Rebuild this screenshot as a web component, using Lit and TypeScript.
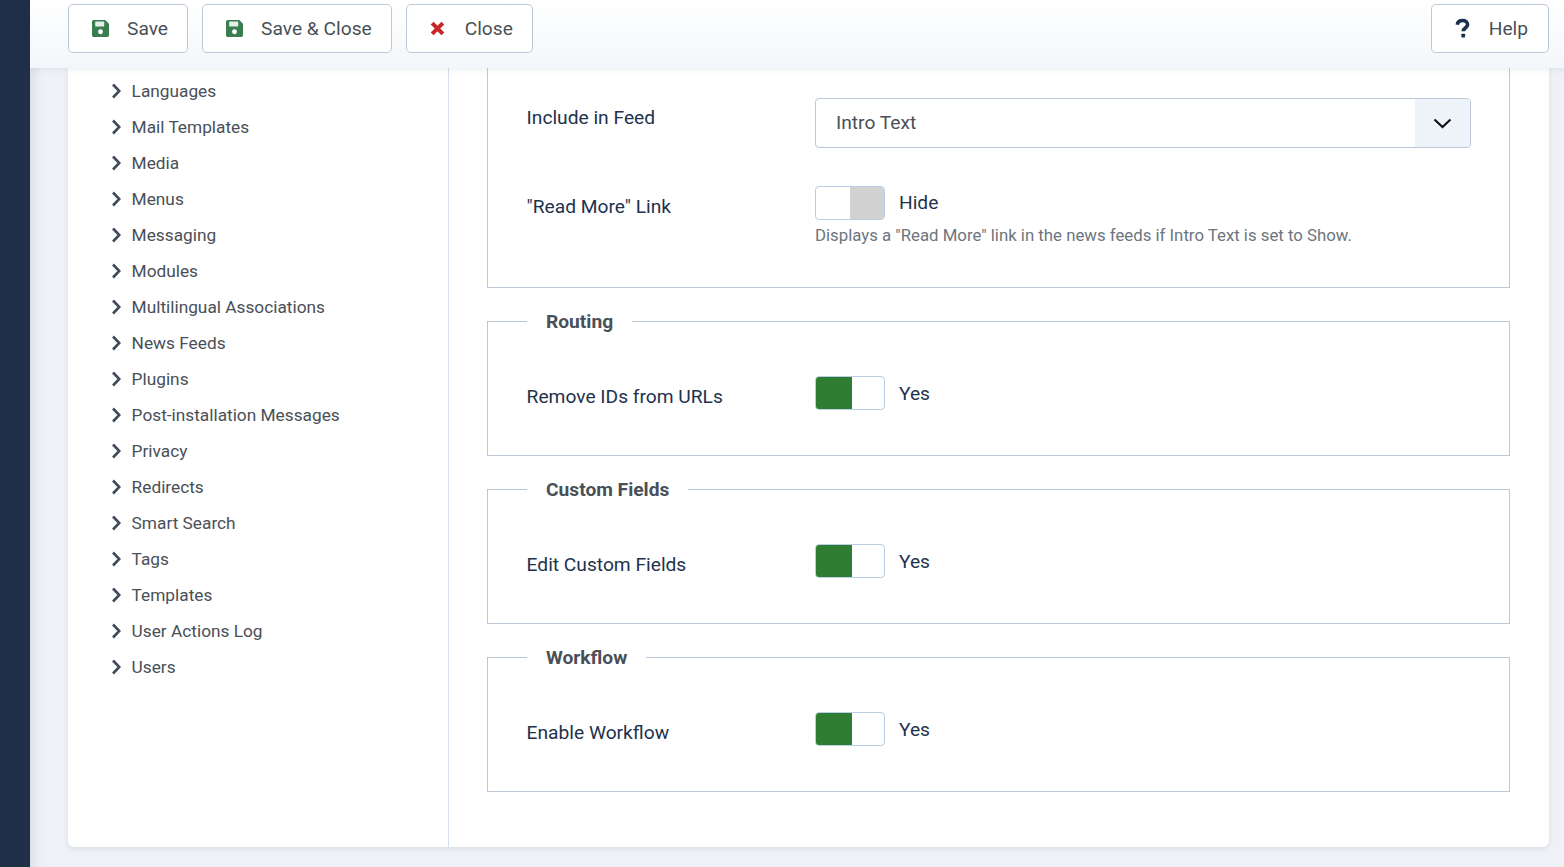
import { LitElement, html, css, svg } from "lit";
import { customElement } from "lit/decorators.js";

const TREE = ["Languages","Mail Templates","Media","Menus","Messaging","Modules","Multilingual Associations","News Feeds","Plugins","Post-installation Messages","Privacy","Redirects","Smart Search","Tags","Templates","User Actions Log","Users"];

const saveIcon = svg`<path fill="#3a7d50" d="M1.700 0H12.500L16 3.500v10.800c0 .9-.8 1.700-1.700 1.700H1.700C.8 16 0 15.200 0 14.300V1.700C0 .8.800 0 1.700 0z"/><rect x="3" y="1.500" width="8.500" height="4.500" fill="#e4efe7" rx=".5"/><circle cx="8" cy="11" r="2.300" fill="#fff"/>`;

@customElement("app-root")
export class AppRoot extends LitElement {
  static styles = css`
    :host { display: flex; height: 867px; overflow: hidden; font-family: Roboto, "Noto Sans", sans-serif; background: #eef2f6; color: #22324d; }
    .rail { width: 30px; flex: none; background: #1f2f48; }
    .main { flex: 1; min-width: 0; display: flex; flex-direction: column; box-shadow: inset 12px 0 12px -10px rgba(28,47,74,.14); }
    .toolbar { height: 68px; flex: none; box-sizing: border-box; display: flex; align-items: flex-start; gap: 14px; padding: 4px 15px 0 38px; position: relative; z-index: 1; background: linear-gradient(#fff, #f3f6fa); box-shadow: 0 1px 6px rgba(28,47,74,.1); }
    .btn { height: 49px; box-sizing: border-box; display: flex; align-items: center; padding: 0 19px 0 19px; background: #fff; border: 1px solid #bcc8da; border-radius: 5px; font-size: 19.200px; color: #495057; }
    .btn.help { padding-right: 20px; }
    .btn svg { display: block; flex: none; }
    .btn .ic { width: 24px; margin-right: 15px; display: flex; justify-content: center; }
    .btn.help .ic { margin-right: 14px; }
    .spacer { flex: 1; }
    .card { width: 1481px; height: 779px; margin-left: 38px; flex: none; box-sizing: border-box; display: flex; background: #fff; border-radius: 0 0 6px 6px; box-shadow: 0 2px 5px rgba(28,47,74,.1); }
    .tree { width: 381px; flex: none; box-sizing: border-box; margin: 0; padding: 5px 0 0 43px; border-right: 1px solid #d5dfed; list-style: none; }
    .tree li { height: 36px; display: flex; align-items: center; font-size: 17.280px; color: #495057; }
    .tree svg { margin-right: 10.600px; flex: none; }
    .content { flex: 1; min-width: 0; padding: 0 39px 0 38px; }
    fieldset { margin: 20px 0 0; padding: 0 38px 0 38.600px; height: 148px; box-sizing: border-box; border: 1px solid #bcc8da; display: block; min-width: 0; }
    fieldset.first { margin: 0; height: 220px; border-top: 0; padding-top: 30px; }
    legend { margin-left: .4px; padding: 2px 19px 0; font-size: 19.200px; font-weight: 700; line-height: 24px; color: #495057; }
    .row { display: flex; align-items: flex-start; }
    .label { width: 288.400px; flex: none; font-size: 19.200px; line-height: 24px; color: #22324d; }
    .select { flex: 1; height: 50px; box-sizing: border-box; display: flex; align-items: center; border: 1px solid #bcc8da; border-radius: 4px; font-size: 19.200px; color: #495057; padding: 0 0 2px 20px; position: relative; overflow: hidden; }
    .arrow { position: absolute; right: 0; top: 0; bottom: 0; width: 55px; background: #eef3fa; display: flex; align-items: center; justify-content: center; }
    .switch { display: block; width: 70px; height: 34px; flex: none; box-sizing: border-box; border: 1px solid #b9cfe4; border-radius: 4px; background: #fff; overflow: hidden; }
    .switch i { display: block; height: 100%; }
    .switch.off { display: flex; justify-content: flex-end; }
    .switch.off i { width: 34px; background: #d2d2d2; }
    .switch.on i { width: 36px; background: #2e7d32; }
    .ctl { display: flex; align-items: center; gap: 14px; height: 34px; font-size: 19.200px; color: #22324d; }
    .ctl.hide span { padding-bottom: 2px; }
    .hint { margin-top: 3px; font-size: 16.800px; line-height: 24px; color: #6d757e; }
    .r1 { margin-bottom: 38px; }
    .lab1 { padding-top: 8px; }
    .lab2 { padding-top: 9px; }
    .lab3 { padding-top: 9px; }
    .set-body { padding-top: 42px; }
  `;

  private toggle(label: string, text: string) {
    return html`<fieldset><legend>${label}</legend>
      <div class="row set-body"><div class="label lab3">${text}</div>
        <div class="ctl"><div class="switch on"><i></i></div><span>Yes</span></div></div>
    </fieldset>`;
  }

  render() {
    const save = html`<svg width="17" height="17" viewBox="0 0 16 16">${saveIcon}</svg>`;
    return html`
      <div class="rail"></div>
      <div class="main">
        <div class="toolbar">
          <div class="btn"><span class="ic">${save}</span>Save</div>
          <div class="btn"><span class="ic">${save}</span>Save &amp; Close</div>
          <div class="btn"><span class="ic"><svg width="15" height="15" viewBox="0 0 14 14"><path d="M2 2l10 10M12 2L2 12" stroke="#c52827" stroke-width="3.800" fill="none"/></svg></span>Close</div>
          <div class="spacer"></div>
          <div class="btn help"><span class="ic"><svg width="15" height="21" viewBox="0 0 16 22"><path d="M2.500 7C2.800 3.800 5.200 2.500 8 2.500c3 0 5.400 1.600 5.400 4.300 0 3.700-4.600 3.700-4.600 7.200" stroke="#1c2f4a" stroke-width="3.900" fill="none"/><rect x="6.800" y="16.500" width="4" height="4" rx=".7" fill="#1c2f4a"/></svg></span>Help</div>
        </div>
        <div class="card">
          <ul class="tree">
            ${TREE.map((t) => html`<li><svg width="10" height="16" viewBox="0 0 10 16"><path d="M2 1.500L8.300 8 2 14.500" stroke="#3f4a58" stroke-width="2.600" fill="none"/></svg>${t}</li>`)}
          </ul>
          <div class="content">
            <fieldset class="first">
              <div class="row r1"><div class="label lab1">Include in Feed</div>
                <div class="select">Intro Text<div class="arrow"><svg width="19" height="11" viewBox="0 0 19 11"><path d="M1.500 1.500L9.500 9l8-7.500" stroke="#111" stroke-width="2.200" fill="none"/></svg></div></div></div>
              <div class="row"><div class="label lab2">"Read More" Link</div>
                <div><div class="ctl hide"><div class="switch off"><i></i></div><span>Hide</span></div>
                <div class="hint">Displays a "Read More" link in the news feeds if Intro Text is set to Show.</div></div></div>
            </fieldset>
            ${this.toggle("Routing", "Remove IDs from URLs")}
            ${this.toggle("Custom Fields", "Edit Custom Fields")}
            ${this.toggle("Workflow", "Enable Workflow")}
          </div>
        </div>
      </div>
    `;
  }
}
